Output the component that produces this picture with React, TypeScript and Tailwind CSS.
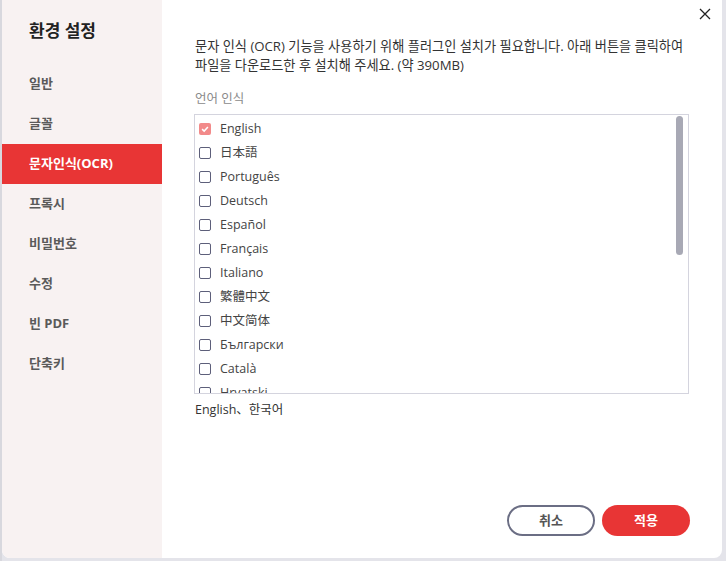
import React from "react";

const menu = ["일반", "글꼴", "문자인식(OCR)", "프록시", "비밀번호", "수정", "빈 PDF", "단축키"];
const langs = ["English", "日本語", "Português", "Deutsch", "Español", "Français", "Italiano", "繁體中文", "中文简体", "Български", "Català", "Hrvatski"];

export default function App() {
  return (
    <div
      className="w-[726px] h-[561px] bg-[#e4e4ea] relative overflow-hidden"
      style={{ fontFamily: '"Open Sans", "Noto Sans CJK KR", sans-serif' }}
    >
      <div className="absolute left-0 top-0 w-[2px] h-full bg-[#d8d8de]" />
      <div className="absolute left-[2px] top-[-8px] w-[720px] h-[566px] bg-white rounded-[8px] flex overflow-hidden">
        <aside className="w-[160px] bg-[#f8f2f2] flex flex-col pt-[8px]">
          <div className="h-[60px] pl-[27px] flex items-center pt-[2px] text-[17px] font-bold text-[#222]">환경 설정</div>
          <div className="flex flex-col pt-[4px]">
            {menu.map((m, i) => (
              <div
                key={m}
                className={
                  i === 2
                    ? "h-[40px] pl-[27px] flex items-center text-[13px] font-bold bg-[#e83535] text-white"
                    : "h-[40px] pl-[27px] flex items-center text-[13px] font-bold text-[#5a5a5a]"
                }
              >
                {m}
              </div>
            ))}
          </div>
        </aside>
        <main className="flex-1 relative pl-[33px] pr-[32px] pt-[45px] flex flex-col">
          <button className="absolute right-[11px] top-[16px] w-[12px] h-[12px]">
            <svg viewBox="0 0 12 12" width="12" height="12">
              <path d="M1 1L11 11M11 1L1 11" stroke="#222" strokeWidth="1.3" />
            </svg>
          </button>
          <p className="text-[13.2px] leading-[19px] text-[#333] whitespace-nowrap">
            문자 인식 (OCR) 기능을 사용하기 위해 플러그인 설치가 필요합니다. 아래 버튼을 클릭하여
            <br />
            파일을 다운로드한 후 설치해 주세요. (약 390MB)
          </p>
          <div className="mt-[14px] text-[12.5px] leading-[19px] text-[#8a8a8a]">언어 인식</div>
          <div className="mt-[6px] ml-[-1px] w-[495px] h-[280px] border border-[#d4d4de] relative overflow-hidden">
            <div className="flex flex-col pt-[2px]">
              {langs.map((l, i) => (
                <div key={l} className="h-[24px] flex items-center pl-[4px] gap-[9px]">
                  {i === 0 ? (
                    <span className="w-[12px] h-[12px] rounded-[2px] bg-[#f28a8a] flex items-center justify-center">
                      <svg viewBox="0 0 12 12" width="10" height="10">
                        <path d="M2.5 6.2L5 8.5L9.5 3.5" stroke="#fff" strokeWidth="1.8" fill="none" />
                      </svg>
                    </span>
                  ) : (
                    <span className="w-[12px] h-[12px] rounded-[2px] border-[1.3px] border-[#5d5f7a] bg-white" />
                  )}
                  <span className="text-[12.5px] text-[#444]">{l}</span>
                </div>
              ))}
            </div>
            <div className="absolute right-[5px] top-[1px] w-[7px] h-[139px] rounded-full bg-[#a8a9b5]" />
          </div>
          <div className="mt-[6px] text-[12.5px] leading-[19px] text-[#333]">English、한국어</div>
          <div className="flex-1" />
          <div className="flex justify-end gap-[7px] pb-[22px]">
            <button className="w-[88px] h-[31px] rounded-full border-2 border-[#6b6e84] text-[13px] text-[#555] font-bold bg-white">취소</button>
            <button className="w-[88px] h-[31px] rounded-full bg-[#e83535] text-[13px] text-white font-bold">적용</button>
          </div>
        </main>
      </div>
    </div>
  );
}
